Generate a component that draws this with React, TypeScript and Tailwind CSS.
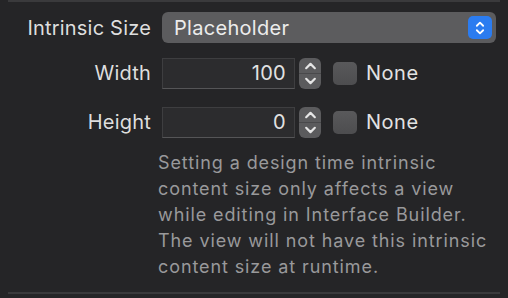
import React from 'react';

function UpDown({ className }: { className?: string }) {
    return (
        <svg viewBox="0 0 12 20" className={className} fill="none" stroke="currentColor"
            strokeWidth={2} strokeLinecap="round" strokeLinejoin="round">
            <path d="M2.5 7.5 L6 4 L9.5 7.5" />
            <path d="M2.5 12.5 L6 16 L9.5 12.5" />
        </svg>
    );
}

function Stepper() {
    return (
        <div className="flex flex-col w-[22px] h-[31px] rounded-[6px] bg-[#5b5b5d] text-[#e6e6e6]">
            <div className="flex-1 flex items-center justify-center border-b border-[#49494b]">
                <svg viewBox="0 0 12 8" className="w-[13px] h-[9px]" fill="none" stroke="currentColor"
                    strokeWidth={2} strokeLinecap="round" strokeLinejoin="round">
                    <path d="M2 6.5 L6 2.5 L10 6.5" />
                </svg>
            </div>
            <div className="flex-1 flex items-center justify-center">
                <svg viewBox="0 0 12 8" className="w-[13px] h-[9px]" fill="none" stroke="currentColor"
                    strokeWidth={2} strokeLinecap="round" strokeLinejoin="round">
                    <path d="M2 1.5 L6 5.5 L10 1.5" />
                </svg>
            </div>
        </div>
    );
}

function SizeRow({ label, value }: { label: string; value: string }) {
    return (
        <div className="flex items-center h-[32px]">
            <div className="w-[151px] text-right text-[20px] tracking-[0.2px] text-[#dedede]">{label}</div>
            <div className="ml-[11px] w-[133px] h-[31px] flex items-center justify-end pr-[8px]
                            bg-[#2c2c2e] border border-[#3e3e40] border-b-[#555557] text-[20px] tracking-[0.3px] text-[#e2e2e2]">
                {value}
            </div>
            <div className="ml-[4px]">
                <Stepper />
            </div>
            <div className="ml-[12px] w-[24px] h-[23px] rounded-[5px] bg-gradient-to-b from-[#59595b] to-[#4d4d4f]" />
            <div className="ml-[9px] text-[20px] tracking-[0.5px] text-[#e2e2e2]">None</div>
        </div>
    );
}

export default function App() {
    const lineStyle = "mx-[8px] h-[2px] bg-[#3a3a3c]";

    return (
        <div className="w-[508px] h-[298px] bg-[#252527] flex flex-col overflow-hidden"
             style={{ fontFamily: 'Inter, "Noto Sans", sans-serif' }}>

            <div className={lineStyle} />

            <div className="flex items-center h-[31px] mt-[10px]">
                <div className="w-[151px] text-right text-[20px] tracking-[0.2px] text-[#dedede]">Intrinsic Size</div>
                <div className="ml-[11px] w-[334px] h-[31px] rounded-[6px] bg-[#5c5c5e]
                                flex items-center justify-between pl-[12px] pr-[4px]">
                    <span className="text-[20px] tracking-[0.3px] text-[#ececec]">Placeholder</span>
                    <div className="w-[24px] h-[23px] rounded-[5px] bg-[#2b7cf0] flex items-center justify-center text-white">
                        <UpDown className="w-[12px] h-[18px]" />
                    </div>
                </div>
            </div>

            <div className="flex flex-col gap-[17px] mt-[14px]">
                <SizeRow label="Width" value="100" />
                <SizeRow label="Height" value="0" />
            </div>

            <div className="ml-[158px] mt-[12px] text-[18px] leading-[26px] tracking-[0.9px] text-[#99999b]">
                <div>Setting a design time intrinsic</div>
                <div>content size only affects a view</div>
                <div>while editing in Interface Builder.</div>
                <div>The view will not have this intrinsic</div>
                <div>content size at runtime.</div>
            </div>

            <div className="flex-1" />
            <div className={lineStyle + " mb-[4px]"} />
        </div>
    );
}
